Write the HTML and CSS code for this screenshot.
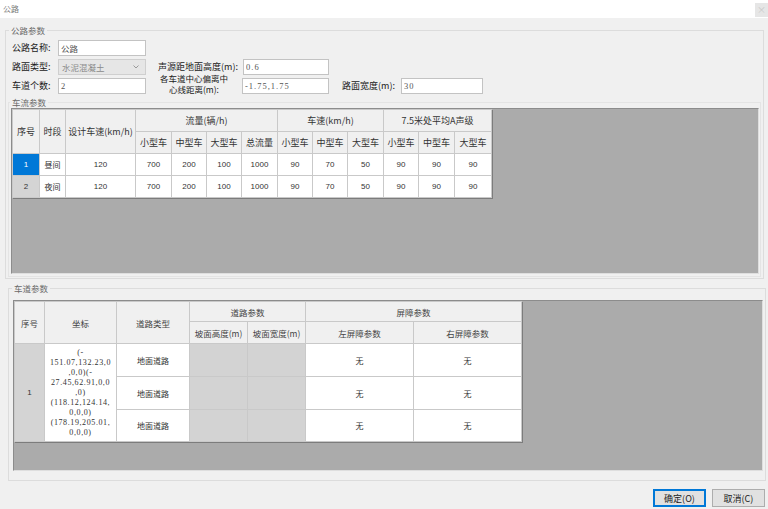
FILE: index.html
```html
<!DOCTYPE html>
<html lang="zh-CN">
<head>
  <meta charset="UTF-8" />
  <title>公路</title>
  <link rel="stylesheet" href="styles.css">
</head>
<body>
  <div class="titlebar">
    <span class="title">公路</span>
    <span class="close">×</span>
  </div>

  <fieldset class="group road-group">
    <legend>公路参数</legend>
    <div class="form">
      <div class="row">
        <label class="lbl lbl-first">公路名称:</label>
        <input class="field w88" type="text" value="公路" />
      </div>
      <div class="row">
        <label class="lbl lbl-first">路面类型:</label>
        <div class="combo">
          <span>水泥混凝土</span>
          <svg width="6" height="4" viewBox="0 0 6 4"><polyline points="0.5,0.5 3,3 5.5,0.5" fill="none" stroke="#9a9a9a" stroke-width="1" /></svg>
        </div>
        <label class="lbl lbl-height">声源距地面高度(m):</label>
        <input class="field num w86" type="text" value="0.6" />
      </div>
      <div class="row">
        <label class="lbl lbl-first">车道个数:</label>
        <input class="field num w88" type="text" value="2" />
        <label class="lbl lbl-offset">各车道中心偏离中<br>心线距离(m):</label>
        <input class="field num w87" type="text" value="-1.75,1.75" />
        <label class="lbl lbl-width">路面宽度(m):</label>
        <input class="field num w82" type="text" value="30" />
      </div>
    </div>

    <fieldset class="group flow-group">
      <legend>车流参数</legend>
      <div class="grid-panel flow-panel">
        <table class="grid flow">
          <colgroup>
            <col style="width:27px"><col style="width:26px"><col style="width:70px">
            <col style="width:36px"><col style="width:35px"><col style="width:35px"><col style="width:36px">
            <col style="width:35px"><col style="width:35px"><col style="width:36px">
            <col style="width:35px"><col style="width:36px"><col style="width:37px">
          </colgroup>
          <tr>
            <th rowspan="2">序号</th>
            <th rowspan="2">时段</th>
            <th rowspan="2">设计车速(km/h)</th>
            <th colspan="4">流量(辆/h)</th>
            <th colspan="3">车速(km/h)</th>
            <th colspan="3">7.5米处平均A声级</th>
          </tr>
          <tr>
            <th>小型车</th><th>中型车</th><th>大型车</th><th>总流量</th>
            <th>小型车</th><th>中型车</th><th>大型车</th>
            <th>小型车</th><th>中型车</th><th>大型车</th>
          </tr>
          <tr>
            <td class="rowhead selected">1</td>
            <td class="cn">昼间</td>
            <td>120</td><td>700</td><td>200</td><td>100</td><td>1000</td>
            <td>90</td><td>70</td><td>50</td><td>90</td><td>90</td><td>90</td>
          </tr>
          <tr>
            <td class="rowhead">2</td>
            <td class="cn">夜间</td>
            <td>120</td><td>700</td><td>200</td><td>100</td><td>1000</td>
            <td>90</td><td>70</td><td>50</td><td>90</td><td>90</td><td>90</td>
          </tr>
        </table>
      </div>
    </fieldset>
  </fieldset>

  <fieldset class="group lane-group">
    <legend>车道参数</legend>
    <div class="grid-panel lane-panel">
      <table class="grid lane">
        <colgroup>
          <col style="width:30px"><col style="width:72px"><col style="width:73px">
          <col style="width:58px"><col style="width:58px">
          <col style="width:108px"><col style="width:108px">
        </colgroup>
        <tr class="h1">
          <th rowspan="2">序号</th>
          <th rowspan="2">坐标</th>
          <th rowspan="2">道路类型</th>
          <th colspan="2">道路参数</th>
          <th colspan="2">屏障参数</th>
        </tr>
        <tr class="h2">
          <th>坡面高度(m)</th><th>坡面宽度(m)</th>
          <th>左屏障参数</th><th>右屏障参数</th>
        </tr>
        <tr class="r33">
          <td class="rowhead" rowspan="3">1</td>
          <td class="coords" rowspan="3">(-<br>151.07,132.23,0<br>,0,0)(-<br>27.45,62.91,0,0<br>,0)<br>(118.12,124.14,<br>0,0,0)<br>(178.19,205.01,<br>0,0,0)</td>
          <td class="cn">地面道路</td>
          <td class="off"></td><td class="off"></td>
          <td class="cn">无</td><td class="cn">无</td>
        </tr>
        <tr class="r33">
          <td class="cn">地面道路</td>
          <td class="off"></td><td class="off"></td>
          <td class="cn">无</td><td class="cn">无</td>
        </tr>
        <tr class="r32">
          <td class="cn">地面道路</td>
          <td class="off"></td><td class="off"></td>
          <td class="cn">无</td><td class="cn">无</td>
        </tr>
      </table>
    </div>
  </fieldset>

  <div class="footer">
    <button class="btn default" type="button">确定(O)</button>
    <button class="btn" type="button">取消(C)</button>
  </div>
</body>
</html>
```

FILE: styles.css
```css
* {
  box-sizing: border-box;
}
html, body {
  margin: 0;
  padding: 0;
}
body {
  width: 768px;
  height: 509px;
  overflow: hidden;
  background: #f0f0f0;
  font-family: "Noto Sans CJK SC", sans-serif;
  font-size: 9px;
  color: #222;
}
.titlebar {
  display: flex;
  justify-content: space-between;
  height: 18px;
  background: #fff;
}
.title {
  font-size: 8px;
  line-height: 18px;
  color: #777;
  padding-left: 3px;
}
.close {
  width: 13px;
  height: 14px;
  margin-top: 3px;
  background: #e6e6e6;
  color: #c8c8c8;
  font-size: 9px;
  line-height: 14px;
  text-align: center;
}

.group {
  margin: 0;
  padding: 0;
  min-width: 0;
  border: 1px solid #dcdcdc;
}
.group legend {
  font-size: 8.5px;
  line-height: 12px;
  color: #6a6a6a;
  padding: 0 2px;
}
.road-group {
  margin: 6px 4px 0 5px;
  padding: 4px 2px 1px 6px;
}
.road-group > legend {
  margin-left: -3px;
}
.flow-group {
  margin: 2px 0 0 -4px;
  padding: 0 1px 2px 2px;
  border-color: #e4e4e4;
}
.flow-group > legend {
  margin-left: -1px;
}
.lane-group {
  margin: 3px 2px 0 8px;
  padding: 6px 2px 9px 4px;
}
.lane-group > legend {
  margin-left: -1px;
}

.form {
  display: flex;
  flex-direction: column;
  gap: 3px;
}
.row {
  display: flex;
  align-items: center;
  height: 16px;
}
.lbl {
  color: #1a1a1a;
  white-space: nowrap;
  line-height: 10px;
}
.lbl-first {
  width: 46px;
}
.lbl-height {
  width: 85px;
  margin-left: 12px;
}
.lbl-offset {
  width: 72px;
  margin: 0 12px;
  align-self: flex-end;
  line-height: 10.5px;
  font-size: 8.5px;
  text-align: center;
}
.lbl-width {
  width: 59px;
  margin-left: 13px;
}
.field {
  height: 16px;
  margin: 0;
  padding: 0 2px;
  border: 1px solid #c3c3c3;
  background: #fff;
  font-family: "Liberation Serif", "Noto Sans CJK SC", serif;
  font-size: 8.5px;
  color: #555;
  outline: none;
}
.field.num {
  letter-spacing: 1px;
}
.w88 { width: 88px; }
.w87 { width: 87px; }
.w86 { width: 86px; }
.w82 { width: 82px; }
.combo {
  display: flex;
  align-items: center;
  justify-content: space-between;
  width: 88px;
  height: 16px;
  padding: 0 6px 0 3px;
  background: #e6e6e6;
  border: 1px solid #cfcfcf;
  color: #8a8a8a;
  font-size: 8.5px;
}

.grid-panel {
  background: #ababab;
  border: 1px solid;
  border-color: #8c8c8c #dedede #dedede #8c8c8c;
}
.flow-panel {
  height: 166px;
}
.lane-panel {
  height: 171px;
}
.grid {
  border-collapse: collapse;
  table-layout: fixed;
  background: #fff;
  box-shadow: 1px 1px 0 #7c7c7c;
}
.grid th,
.grid td {
  border: 1px solid #c9c9c9;
  padding: 0;
  text-align: center;
  white-space: nowrap;
  overflow: hidden;
}
.grid th {
  background: #f0f0f0;
  font-weight: normal;
  font-size: 9px;
  color: #333;
}
.grid td {
  font-family: "Liberation Sans", "Noto Sans CJK SC", sans-serif;
  font-size: 8px;
  color: #333;
}
.grid td.cn {
  font-family: "Noto Sans CJK SC", sans-serif;
}
.flow {
  width: 479px;
}
.flow tr {
  height: 22px;
}
.lane {
  width: 507px;
}
.lane th {
  color: #444;
  font-size: 8.5px;
}
.lane .h1 { height: 20px; }
.lane .h2 { height: 22px; }
.lane .r33 { height: 33px; }
.lane .r32 { height: 32px; }
.rowhead {
  background: #d4d4d4;
}
.grid td.selected {
  background: #0078d7;
  color: #fff;
}
.grid td.off {
  background: #d3d3d3;
}
.grid td.coords {
  font-family: "Liberation Serif", serif;
  font-size: 8px;
  letter-spacing: 0.6px;
  line-height: 10px;
}

.footer {
  display: flex;
  justify-content: flex-end;
  gap: 6px;
  margin-top: 8px;
  padding-right: 3px;
}
.btn {
  width: 53px;
  height: 18px;
  padding: 0;
  background: #e1e1e1;
  border: 1px solid #adadad;
  font-family: "Noto Sans CJK SC", sans-serif;
  font-size: 9px;
  color: #222;
}
.btn.default {
  border-color: #0078d7;
  box-shadow: inset 0 0 0 1px #0078d7;
}
```
